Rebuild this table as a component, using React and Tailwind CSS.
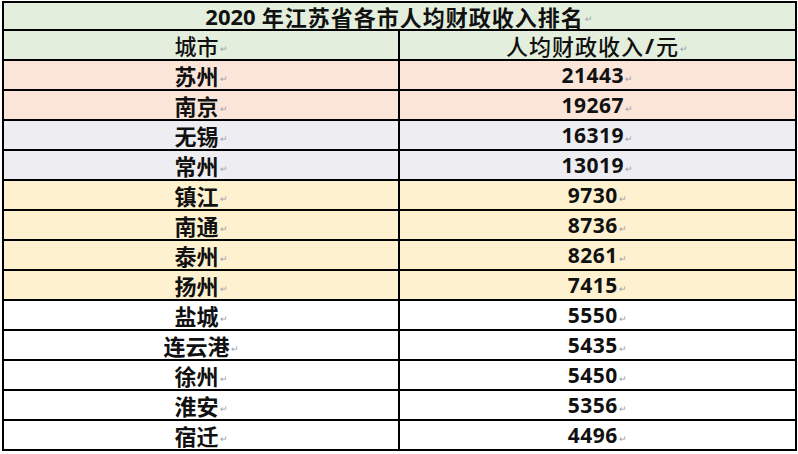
const rows = [
  { city: "苏州", value: "21443", bg: "bg-[#fbe5d9]" },
  { city: "南京", value: "19267", bg: "bg-[#fbe5d9]" },
  { city: "无锡", value: "16319", bg: "bg-[#eeeef2]" },
  { city: "常州", value: "13019", bg: "bg-[#eeeef2]" },
  { city: "镇江", value: "9730", bg: "bg-[#fdf1d0]" },
  { city: "南通", value: "8736", bg: "bg-[#fdf1d0]" },
  { city: "泰州", value: "8261", bg: "bg-[#fdf1d0]" },
  { city: "扬州", value: "7415", bg: "bg-[#fdf1d0]" },
  { city: "盐城", value: "5550", bg: "bg-white" },
  { city: "连云港", value: "5435", bg: "bg-white" },
  { city: "徐州", value: "5450", bg: "bg-white" },
  { city: "淮安", value: "5356", bg: "bg-white" },
  { city: "宿迁", value: "4496", bg: "bg-white" },
]

const cjk = "font-['Noto_Sans_CJK_SC',sans-serif]"
const num = "font-['Open_Sans','Noto_Sans_CJK_SC',sans-serif]"

function Mark() {
  return <span className="ml-[1px] text-[9px] leading-none font-normal text-gray-400 self-end mb-[6px]">↵</span>
}

function Cell({ children, className = "" }) {
  return (
    <div className={`flex items-center justify-center h-[28px] leading-none ${className}`}>
      {children}
      <Mark />
    </div>
  )
}

export default function App() {
  return (
    <div className="w-[798px] h-[454px] bg-white pt-[1px] pl-[2px]">
      <div className="w-[795px] border-2 border-black text-[#111]">
        <Cell className={`bg-[#e3efdc] border-b-2 border-black font-bold text-[22px] tracking-[1px] ${cjk}`}>
          <span className={`${num} mr-[6px] tracking-normal`}>2020</span>年江苏省各市人均财政收入排名
        </Cell>
        <div className="grid grid-cols-[396px_1fr] bg-[#e3efdc] border-b-2 border-black">
          <Cell className={`border-r-2 border-black text-[22px] font-medium ${cjk}`}>城市</Cell>
          <Cell className={`text-[22px] font-medium tracking-[1px] ${cjk}`}>
            人均财政收入<span className={`${num} font-bold mx-[1px]`}>/</span>元
          </Cell>
        </div>
        {rows.map((r, i) => (
          <div
            key={r.city}
            className={`grid grid-cols-[396px_1fr] ${r.bg} ${i < rows.length - 1 ? "border-b-2 border-black" : ""}`}
          >
            <Cell className={`border-r-2 border-black text-[22px] font-bold ${cjk}`}>{r.city}</Cell>
            <Cell className={`text-[21px] font-bold tracking-[0.5px] ${num}`}>{r.value}</Cell>
          </div>
        ))}
      </div>
    </div>
  )
}
